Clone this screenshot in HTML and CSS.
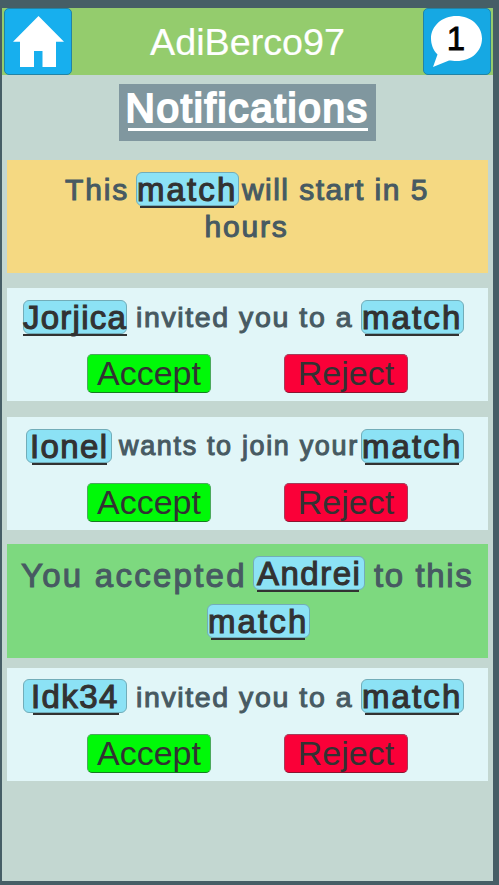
FILE: index.html
```html
<!DOCTYPE html>
<html lang="en">
<head>
<meta charset="utf-8">
<title>Notifications</title>
<link rel="stylesheet" href="styles.css">
</head>
<body>
<main class="screen">
  <header class="topbar">
    <button class="icon-button" aria-label="Home">
      <svg width="66" height="65" viewBox="5 9 66 65"><path fill="#fff" d="M38.500 16L64 41.700H56V67H42.500V51H34V67H20V41.700H13Z"/></svg>
    </button>
    <div class="username">AdiBerco97</div>
    <button class="icon-button messages" aria-label="Messages">
      <svg width="66" height="65" viewBox="424 9 66 65"><path fill="#fff" d="M456.500 16C471 16 482 26 482 38.500S472 61 456.500 61C454 61 451 60.500 449 60.500L433 67L437.500 54.500C433 50 431 44 431 38.500C431 26 442 16 456.500 16Z"/></svg>
      <span class="count">1</span>
    </button>
  </header>
  <h1 class="title"><span>Notifications</span></h1>

  <section class="card reminder">
    <div class="line l-reminder"><span class="text t30 w-this">This</span><a class="pill match">match</a><span class="text t30 w-will">will start in 5</span></div>
    <div class="line l-hours"><span class="text t30">hours</span></div>
  </section>

  <section class="card request">
    <div class="line"><a class="pill jorjica">Jorjica</a><span class="text t28">invited you to a</span><a class="pill match">match</a></div>
    <div class="actions"><button class="action accept">Accept</button><button class="action reject">Reject</button></div>
  </section>

  <section class="card request join">
    <div class="line"><a class="pill ionel">Ionel</a><span class="text t27">wants to join your</span><a class="pill match">match</a></div>
    <div class="actions"><button class="action accept">Accept</button><button class="action reject">Reject</button></div>
  </section>

  <section class="card accepted">
    <div class="line l-accepted"><span class="text t33 w-you">You accepted</span><a class="pill andrei">Andrei</a><span class="text t33 w-to">to this</span></div>
    <div class="line l-match"><a class="pill match">match</a></div>
  </section>

  <section class="card request last">
    <div class="line"><a class="pill idk">Idk34</a><span class="text t28">invited you to a</span><a class="pill match">match</a></div>
    <div class="actions"><button class="action accept">Accept</button><button class="action reject">Reject</button></div>
  </section>
</main>
</body>
</html>
```

FILE: styles.css
```css
* { box-sizing: border-box; }
body {
  margin: 0;
  height: 885px;
  padding: 8px 6px 4px 2px;
  background: #465e66;
  font-family: "Liberation Sans", Arial, sans-serif;
  overflow: hidden;
}
button { font: inherit; padding: 0; margin: 0; }
.screen { height: 873px; background: #c3d7d1; display: flex; flex-direction: column; }
.topbar {
  height: 67px;
  flex: none;
  padding: 0 2px;
  background: #94cc6d;
  display: flex;
  justify-content: space-between;
}
.icon-button {
  position: relative;
  width: 68px;
  height: 67px;
  border: 1px solid #2283a5;
  border-radius: 5px;
  background: #17afee;
}
.icon-button.messages { background: #16a8e3; }
.icon-button svg { display: block; }
.count {
  position: absolute;
  left: 0;
  top: 11px;
  width: 64px;
  text-align: center;
  font-size: 33px;
  line-height: 38px;
  color: #000;
  -webkit-text-stroke: 0.8px #000;
}
.username { font-size: 37.700px; line-height: 68px; color: #fff; -webkit-text-stroke: 0.2px #fff; }
.title {
  align-self: flex-start;
  margin: 9px 0 19px 117px;
  width: 257px;
  height: 57px;
  padding-left: 6.500px;
  background: #80979f;
  color: #fff;
  font-size: 40.500px;
  font-weight: 400;
  line-height: 48px;
  letter-spacing: 1.75px;
  -webkit-text-stroke: 2.2px #fff;
  position: relative;
  white-space: nowrap;
}
.title::after {
  content: "";
  position: absolute;
  left: 9px;
  right: 8px;
  top: 44px;
  height: 3px;
  background: #fff;
}
.card { margin: 0 5px; height: 113px; flex: none; background: #e1f6f8; }
.reminder { background: #f5d982; padding-top: 12px; margin-bottom: 15px; }
.accepted { background: #7dd97f; height: 114px; padding-top: 12px; margin-bottom: 10px; }
.request { padding-top: 12px; margin-bottom: 16px; }
.request.join { margin-bottom: 14px; }
.request.last { padding-top: 11px; margin-bottom: 0; }
.last .actions { margin-top: 21px; }
.line { display: flex; height: 34px; padding: 0 24px 0 16px; justify-content: space-between; }
.text { color: #475a62; line-height: 34px; white-space: nowrap; -webkit-text-stroke: 1.05px #475a62; }
.t27 { font-size: 27px; letter-spacing: 1.65px; margin-left: 7px; width: 243px; }
.t28 { font-size: 28.500px; letter-spacing: 1.6px; margin-left: 9px; width: 225px; }
.last .t28 { padding-top: 1px; }
.t30 { font-size: 30px; letter-spacing: 1.45px; padding-top: 1px; }
.t33 { font-size: 33px; letter-spacing: 1.75px; padding-top: 3px; }
.pill {
  position: relative;
  flex: none;
  height: 34px;
  border: 1px solid #72adb9;
  border-radius: 6px;
  background: #8ce2f5;
  color: #323232;
  font-size: 33px;
  line-height: 33px;
  letter-spacing: 1.9px;
  white-space: nowrap;
  -webkit-text-stroke: 1.1px #323232;
}
.pill::after {
  content: "";
  position: absolute;
  left: 3px;
  right: 3px;
  top: 33px;
  height: 2px;
  background: #323232;
}
.match { width: 103px; padding-left: 0; letter-spacing: 2.1px; }
.match::after { left: 3px; right: 4px; }
.jorjica { width: 104px; letter-spacing: 1.25px; text-indent: -1px; }
.jorjica::after { left: -1px; right: -1px; }
.ionel { width: 86px; margin-left: 3px; padding-left: 3px; letter-spacing: 1.4px; }
.ionel::after { left: 5px; right: 4px; }
.andrei { width: 112px; padding-left: 3px; letter-spacing: 1.5px; }
.andrei::after { right: 5px; }
.idk { width: 104px; padding-left: 7px; letter-spacing: 1.4px; }
.idk::after { left: 9px; right: 7px; }
.l-reminder { padding: 0 0 0 58px; justify-content: flex-start; }
.w-this { width: 71px; letter-spacing: 1.9px; }
.w-will { padding-left: 3px; }
.l-hours { padding: 3px 0 0 197.500px; justify-content: flex-start; }
.l-hours .text { letter-spacing: 1.8px; }
.l-accepted { padding: 0 0 0 14px; justify-content: flex-start; }
.w-you { width: 232px; letter-spacing: 2.25px; }
.w-to { padding-left: 9px; letter-spacing: 1.6px; }
.l-match { padding: 0 0 0 200px; margin-top: 14px; justify-content: flex-start; }
.actions { display: flex; gap: 73px; margin: 20px 0 0 80px; }
.action {
  width: 124px;
  height: 39px;
  border: 1px solid #557a58;
  border-radius: 5px;
  font-size: 34px;
  line-height: 37px;
  color: #323232;
}
.accept { background: #00f908; border-color: #4ba95d; border-bottom-color: #147b20; }
.reject { background: #fa0038; border-color: #a33d5b; border-bottom-color: #8a1430; }
```
